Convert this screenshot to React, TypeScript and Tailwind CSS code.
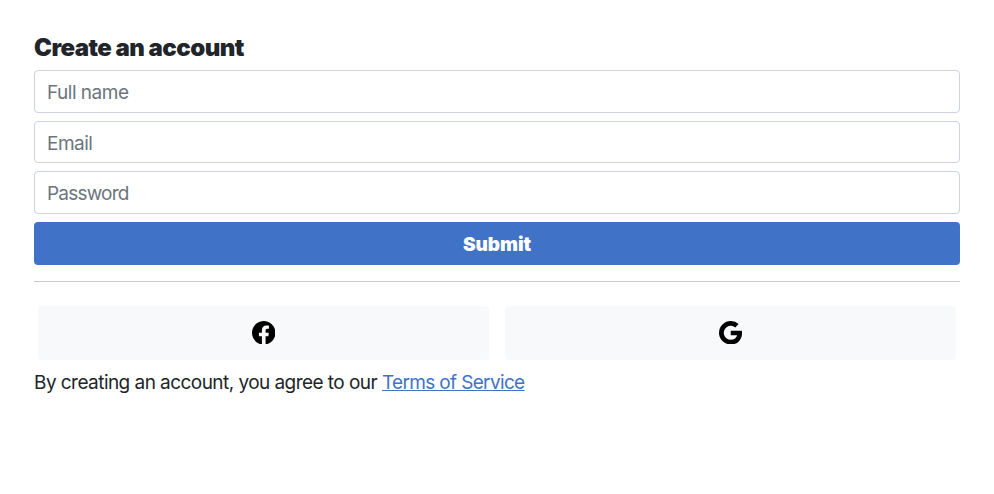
import React from "react";
import { BsFacebook, BsGoogle } from "react-icons/bs";

const field =
  "block w-full rounded-[4px] border border-[#ced4da] bg-white px-3 pt-[2px] text-[19px] text-[#212529] outline-none placeholder:text-[#6c757d] placeholder:opacity-100";

export default function App() {
  return (
    <main className="min-h-[494px] bg-white px-[34px] pt-[33px] font-['Inter',sans-serif] text-[#212529]">
      <h1 className="mb-2 h-[29px] text-[24px] leading-[29px] font-black tracking-[-0.55px]">Create an account</h1>
      <form className="flex flex-col gap-2">
        <input className={`${field} h-[43px] tracking-[-0.5px]`} placeholder="Full name" />
        <input className={`${field} h-[42px] tracking-[-0.5px]`} type="email" placeholder="Email" />
        <input className={`${field} h-[43px] tracking-[-0.8px]`} type="password" placeholder="Password" />
        <button type="button" className="h-[43px] rounded-[4px] bg-[#4073c8] pt-[3px] text-[19px] font-black tracking-[-0.05px] text-white">Submit</button>
      </form>
      <hr className="mt-4 border-[#c8c9ca]" />
      <div className="mx-1 mt-6 flex gap-4">
        <button className="flex h-[54px] flex-1 items-center justify-center rounded-[4px] bg-[#f8f9fa] pb-px text-black" aria-label="Facebook">
          <BsFacebook size={23.5} />
        </button>
        <button className="flex h-[54px] flex-1 items-center justify-center rounded-[4px] bg-[#f8f9fa] pb-px text-black" aria-label="Google">
          <BsGoogle size={23.5} />
        </button>
      </div>
      <p className="mt-2 text-[19px] leading-[29px] tracking-[-0.55px]">
        By creating an account, you agree to our <a href="#" className="tracking-[-0.65px] text-[#4073c8] underline">Terms of Service</a>
      </p>
    </main>
  );
}
